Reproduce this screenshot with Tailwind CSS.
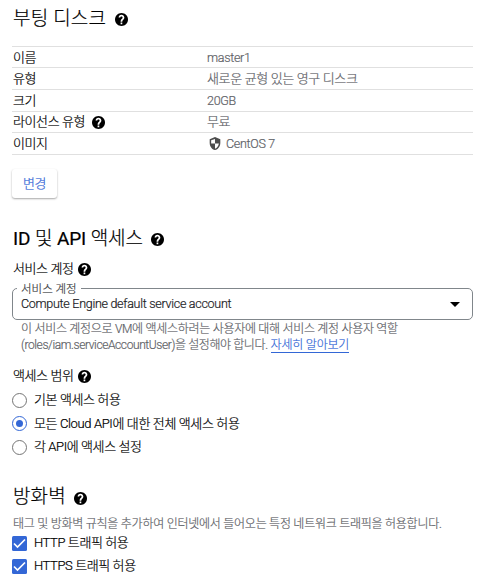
<!DOCTYPE html>
<html lang="ko">
<head>
  <meta charset="UTF-8">
  <meta name="viewport" content="width=device-width, initial-scale=1.0">
  <title>인스턴스 만들기</title>
  <script src="https://cdn.jsdelivr.net/npm/@tailwindcss/browser@4"></script>
</head>
<body class="bg-white text-black w-[478px] h-[584px] overflow-hidden pl-3 pr-[5px] font-[Roboto,'Noto_Sans_CJK_KR',sans-serif] font-light [-webkit-text-stroke:0.2px] text-[13px] leading-5 whitespace-nowrap">

  <!-- Icon -->
  <svg class="hidden">
    <symbol id="help" viewBox="2 2 20 20">
      <path d="M12 2C6.480 2 2 6.480 2 12s4.480 10 10 10 10-4.480 10-10S17.520 2 12 2z" fill="#000" />
      <path d="M13.200 19.200h-2.600v-2.600h2.600zM15.400 11.600l-1 1c-.8.8-1.200 1.400-1.200 2.700h-2.600v-.6c0-1.200.5-2.200 1.200-3l1.300-1.300c.4-.4.6-.8.6-1.400 0-1-.8-1.700-1.800-1.700s-1.800.8-1.800 1.800H7.500c0-2.500 2-4.400 4.400-4.400s4.500 1.900 4.500 4.300c0 1-.4 1.900-1 2.600z" fill="#fff" />
    </symbol>
  </svg>

  <!-- Boot disk -->
  <h2 class="flex items-center h-[46px] pb-[9px] pl-px text-[19px]">
    <span class="tracking-[0.2px]">부팅 디스크</span>
    <svg class="w-[13px] h-[13px] ml-[8.500px] mt-px"><use href="#help" /></svg>
  </h2>
  <dl class="border-t border-[#e0e0e0]">
    <div class="flex items-center h-[21px] border-b border-[#e0e0e0]">
      <dt class="w-[195px] pl-px pt-px tracking-[-0.4px]">이름</dt>
      <dd class="text-[#5f6368] text-[12.5px] tracking-[-0.3px] pt-0.5">master1</dd>
    </div>
    <div class="flex items-center h-[22px] border-b border-[#e0e0e0]">
      <dt class="w-[195px] pl-px tracking-[-0.4px]">유형</dt>
      <dd class="text-[#5f6368] tracking-[-0.35px]">새로운 균형 있는 영구 디스크</dd>
    </div>
    <div class="flex items-center h-[22px] border-b border-[#e0e0e0]">
      <dt class="w-[195px] pl-px tracking-[-0.4px]">크기</dt>
      <dd class="text-[#5f6368] text-[12.5px] tracking-[-0.3px]">20GB</dd>
    </div>
    <div class="flex items-center h-[21px] border-b border-[#e0e0e0]">
      <dt class="w-[195px] pl-px flex items-center tracking-[-0.4px]">라이선스 유형
        <svg class="w-[13px] h-[13px] ml-[7px]"><use href="#help" /></svg>
      </dt>
      <dd class="text-[#5f6368] tracking-[-0.4px]">무료</dd>
    </div>
    <div class="flex items-center h-[22px] border-b border-[#e0e0e0]">
      <dt class="w-[195px] pl-px tracking-[-0.4px]">이미지</dt>
      <dd class="flex items-center text-[#5f6368] text-[12.5px] tracking-[-0.3px]">
        <svg class="w-[12px] h-[13px] ml-0.5 mr-[5px]" viewBox="3 1 18 22" fill="#4d4d4d">
          <path d="M12 1 3 5v6c0 5.550 3.840 10.740 9 12 5.160-1.260 9-6.450 9-12V5zM12 4.200v7.800h6.500c-.5 4.100-3.100 7.700-6.500 8.800V12H5.500V6.700z" fill-rule="evenodd" />
        </svg>
        CentOS 7
      </dd>
    </div>
  </dl>
  <button class="block mt-[14px] w-[45px] h-[29px] rounded-[3px] bg-white text-[#3367d6] tracking-[-0.4px] shadow-[0_1px_2px_rgba(0,0,0,0.35)]">변경</button>

  <!-- Identity and API access -->
  <h2 class="flex items-center h-[26px] mt-[28px] pl-px text-[19px]">
    <span class="tracking-[-0.1px]"><span class="font-normal">ID</span> 및 <span class="font-normal">API</span> 액세스</span>
    <svg class="w-[13px] h-[13px] ml-[8px]"><use href="#help" /></svg>
  </h2>
  <div class="flex items-center mt-[7px] h-5">
    <span class="pl-px tracking-[-0.4px]">서비스 계정</span>
    <svg class="w-[13px] h-[13px] ml-1"><use href="#help" /></svg>
  </div>
  <div class="relative mt-[9px] flex items-center h-8 w-[461px] pl-2 pr-3 border border-[#80868b] rounded-[5px]">
    <span class="absolute left-1 -top-2 px-1 h-4 leading-4 bg-white text-[11.5px] text-[#3c4043]">서비스 계정</span>
    <span class="text-[#202124] text-[12.5px] tracking-[-0.28px]">Compute Engine default service account</span>
    <svg class="w-[10px] h-[5px] ml-auto" viewBox="0 0 10 5"><path d="M0 0h10L5 5z" /></svg>
  </div>
  <p class="ml-[9px] mt-px text-[12px] leading-4 text-[#5f6368]">
    <span class="tracking-[-0.29px]">이 서비스 계정으로 VM에 액세스하려는 사용자에 대해 서비스 계정 사용자 역할</span><br>
    <span class="tracking-[-0.4px]">(roles/iam.serviceAccountUser)을 설정해야 합니다.</span>
    <a href="#" class="inline-block h-4 text-[#3367d6] border-b border-[#3367d6] tracking-[-0.2px]">자세히 알아보기</a>
  </p>
  <div class="flex items-center mt-[13px] h-5">
    <span class="pl-px tracking-[-0.4px]">액세스 범위</span>
    <svg class="w-[13px] h-[13px] ml-1"><use href="#help" /></svg>
  </div>
  <div class="mt-0.5">
    <label class="flex items-center h-6">
      <span class="w-[15px] h-[15px] mr-[7px] rounded-full border border-[#757575]"></span>
      <span class="tracking-[-0.4px]">기본 액세스 허용</span>
    </label>
    <label class="flex items-center h-[23px]">
      <span class="flex items-center justify-center w-[15px] h-[15px] mr-[7px] rounded-full border border-[#3367d6]">
        <span class="w-[7px] h-[7px] rounded-full bg-[#3367d6]"></span>
      </span>
      <span class="tracking-[-0.37px]">모든 Cloud API에 대한 전체 액세스 허용</span>
    </label>
    <label class="flex items-center h-6">
      <span class="w-[15px] h-[15px] mr-[7px] rounded-full border border-[#757575]"></span>
      <span class="tracking-[-0.4px]">각 API에 액세스 설정</span>
    </label>
  </div>

  <!-- Firewall -->
  <h2 class="flex items-center h-[26px] mt-[25px] pl-px text-[19px]">
    <span class="tracking-[0.1px]">방화벽</span>
    <svg class="w-[13px] h-[13px] ml-2 mt-0.5"><use href="#help" /></svg>
  </h2>
  <p class="mt-1 h-[19px] pl-px text-[12px] text-[#5f6368] tracking-[-0.25px]">태그 및 방화벽 규칙을 추가하여 인터넷에서 들어오는 특정 네트워크 트래픽을 허용합니다.</p>
  <label class="flex items-center h-5">
    <svg class="w-[15px] h-[15px] mr-[7px]" viewBox="0 0 15 15">
      <rect width="15" height="15" rx="1.5" fill="#3367d6" />
      <path d="M2 7.5 5.5 11 13 3.5" fill="none" stroke="#fff" stroke-width="1.7" />
    </svg>
    <span class="tracking-[-0.4px]">HTTP 트래픽 허용</span>
  </label>
  <label class="flex items-center h-[26px]">
    <svg class="w-[15px] h-[15px] mr-[7px]" viewBox="0 0 15 15">
      <rect width="15" height="15" rx="1.5" fill="#3367d6" />
      <path d="M2 7.5 5.5 11 13 3.5" fill="none" stroke="#fff" stroke-width="1.7" />
    </svg>
    <span class="tracking-[-0.4px]">HTTPS 트래픽 허용</span>
  </label>

</body>
</html>
